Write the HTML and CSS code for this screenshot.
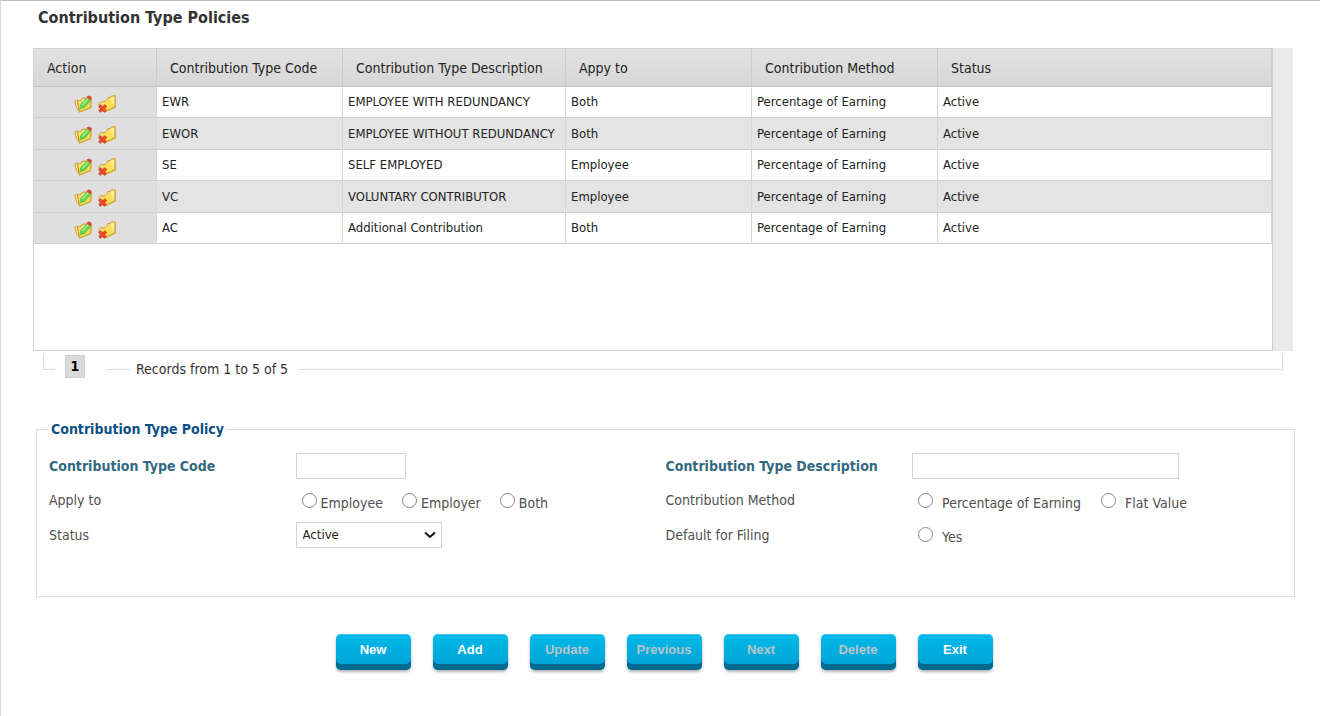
FILE: index.html
```html
<!DOCTYPE html>
<html lang="en">
<head>
<meta charset="utf-8">
<title>Contribution Type Policies</title>
<link rel="stylesheet" href="styles.css">
</head>
<body>
<svg class="sprite" aria-hidden="true">
  <defs>
    <linearGradient id="gold" x1="0" y1="0" x2="1" y2="1">
      <stop offset="0" stop-color="#fff3a0"/>
      <stop offset="1" stop-color="#e8b820"/>
    </linearGradient>
    <symbol id="edit" viewBox="0 0 18 18">
      <path d="M.8 6.2 3.6 4.8 5 15.8 2.6 12.8Z" fill="#fbe58c" stroke="#c99a38" stroke-width=".9"/>
      <path d="M3.6 6.4 7 5.4 8 3.4 11.5 2.8 12 4.2 17.2 3.6 17 12.6 5.4 17.2Z" fill="url(#gold)" stroke="#c1921f" stroke-width=".9"/>
      <path d="M5.5 8 15.8 5 15.6 12 6.4 15.6Z" fill="#f8dc58"/>
      <path d="M5.8 14 6.6 9.8 13 2.4 16.6 5.2 10.6 12.4Z" fill="#58d648" stroke="#49b13c" stroke-width=".5"/>
      <path d="M8.4 10.2 14.2 3.8" stroke="#a9f094" stroke-width="1.4"/>
      <path d="M12.6 1.4 14.8.4 17.6 2 17.4 4.6 16.4 5.2 13 2.6Z" fill="#e44436"/>
    </symbol>
    <symbol id="remove" viewBox="0 0 18 18">
      <path d="M.8 8.6 2.5 7.2 7 6.4 9.2 4.4 10 2.4 12 2.8 13.3 1 17.2.6 17.4 12.2 7.5 16.6 2 14Z" fill="url(#gold)" stroke="#c9982a" stroke-width=".9"/>
      <path d="M10 5.5 12.8 4 13.8 2.2 16 2 16 10.4 10 12.5Z" fill="#fff0a0"/>
      <ellipse cx="11" cy="9.2" rx="4" ry="4.4" fill="#fade58"/>
      <path d="M1.4 10.4 7.6 16.6M8 10.4 1.4 16.6" stroke="#c83a20" stroke-width="3.2"/>
      <path d="M1.8 10.8 7.2 16M7.6 10.8 1.8 16.2" stroke="#f04c2e" stroke-width="2"/>
    </symbol>
  </defs>
</svg>
<main class="page">
  <h1 class="title">Contribution Type Policies</h1>

  <div class="grid-box">
    <div class="grid-body">
      <table class="grid">
        <colgroup><col class="c-action"><col class="c-code"><col class="c-desc"><col class="c-mid"><col class="c-mid"><col></colgroup>
        <thead>
          <tr><th>Action</th><th>Contribution Type Code</th><th>Contribution Type Description</th><th>Appy to</th><th>Contribution Method</th><th>Status</th></tr>
        </thead>
        <tbody>
          <tr><td class="actions"><button type="button" class="icon" aria-label="Edit"><svg><use href="#edit"/></svg></button><button type="button" class="icon" aria-label="Delete"><svg><use href="#remove"/></svg></button></td><td>EWR</td><td>EMPLOYEE WITH REDUNDANCY</td><td>Both</td><td>Percentage of Earning</td><td>Active</td></tr>
          <tr><td class="actions"><button type="button" class="icon" aria-label="Edit"><svg><use href="#edit"/></svg></button><button type="button" class="icon" aria-label="Delete"><svg><use href="#remove"/></svg></button></td><td>EWOR</td><td>EMPLOYEE WITHOUT REDUNDANCY</td><td>Both</td><td>Percentage of Earning</td><td>Active</td></tr>
          <tr><td class="actions"><button type="button" class="icon" aria-label="Edit"><svg><use href="#edit"/></svg></button><button type="button" class="icon" aria-label="Delete"><svg><use href="#remove"/></svg></button></td><td>SE</td><td>SELF EMPLOYED</td><td>Employee</td><td>Percentage of Earning</td><td>Active</td></tr>
          <tr><td class="actions"><button type="button" class="icon" aria-label="Edit"><svg><use href="#edit"/></svg></button><button type="button" class="icon" aria-label="Delete"><svg><use href="#remove"/></svg></button></td><td>VC</td><td>VOLUNTARY CONTRIBUTOR</td><td>Employee</td><td>Percentage of Earning</td><td>Active</td></tr>
          <tr><td class="actions"><button type="button" class="icon" aria-label="Edit"><svg><use href="#edit"/></svg></button><button type="button" class="icon" aria-label="Delete"><svg><use href="#remove"/></svg></button></td><td>AC</td><td>Additional Contribution</td><td>Both</td><td>Percentage of Earning</td><td>Active</td></tr>
        </tbody>
      </table>
    </div>
    <div class="gutter"></div>
  </div>

  <nav class="pager" aria-label="Pages">
    <span class="rule rule-left"></span>
    <button type="button" class="page-no">1</button>
    <span class="rule rule-mid"></span>
    <span class="records">Records from 1 to 5 of 5</span>
    <span class="rule rule-right"></span>
  </nav>

  <form>
    <fieldset class="policy">
      <legend>Contribution Type Policy</legend>
      <div class="fields">
        <label class="required" for="code">Contribution Type Code</label>
        <div><input class="text short" id="code" type="text"></div>
        <label class="required" for="desc">Contribution Type Description</label>
        <div><input class="text long" id="desc" type="text"></div>

        <span>Apply to</span>
        <div class="choices">
          <label class="choice"><input type="radio" name="apply"><span>Employee</span></label>
          <label class="choice"><input type="radio" name="apply"><span>Employer</span></label>
          <label class="choice"><input type="radio" name="apply"><span>Both</span></label>
        </div>
        <span>Contribution Method</span>
        <div class="choices wide">
          <label class="choice"><input type="radio" name="method"><span>Percentage of Earning</span></label>
          <label class="choice"><input type="radio" name="method"><span>Flat Value</span></label>
        </div>

        <label for="status">Status</label>
        <div class="select-box">
          <select id="status"><option>Active</option><option>Inactive</option></select>
          <svg class="chevron" viewBox="0 0 12 8" aria-hidden="true"><path d="M1 1.5 6 6 11 1.5"/></svg>
        </div>
        <span>Default for Filing</span>
        <div class="choices wide">
          <label class="choice"><input type="radio" name="default"><span>Yes</span></label>
        </div>
      </div>
    </fieldset>
    <div class="buttons">
      <button type="button" class="btn">New</button>
      <button type="button" class="btn">Add</button>
      <button type="button" class="btn" disabled>Update</button>
      <button type="button" class="btn" disabled>Previous</button>
      <button type="button" class="btn" disabled>Next</button>
      <button type="button" class="btn" disabled>Delete</button>
      <button type="button" class="btn">Exit</button>
    </div>
  </form>
</main>
</body>
</html>
```
FILE: styles.css
```css
* { box-sizing: border-box; }

body {
  margin: 0;
  min-height: 100vh;
  border-top: 1px solid #bfbfbf;
  border-left: 1px solid #dcdcdc;
  background: #fff;
  color: #505050;
  font: 14px/20px Tahoma, "DejaVu Sans Condensed", "Noto Sans", sans-serif;
}

.sprite { display: block; width: 0; height: 0; }
.page { padding: 7px 25px 20px 32px; }

.title {
  margin: 0 0 20px;
  padding-left: 5px;
  color: #333;
  font-size: 16px;
  line-height: 20px;
}

/* Results grid */
.grid-box { display: flex; margin-right: 2px; }
.grid-body {
  flex: 1;
  min-height: 303px;
  border: 1px solid #d0d0d0;
}
.gutter { width: 20px; background: #eaeaea; }

.grid {
  width: 100%;
  table-layout: fixed;
  border-collapse: separate;
  border-spacing: 0;
  color: #222;
}
.c-action { width: 123px; }
.c-code { width: 186px; }
.c-desc { width: 223px; }
.c-mid { width: 186px; }

.grid th {
  height: 38px;
  padding: 0 0 0 13px;
  border-right: 1px solid #cbcbcb;
  border-bottom: 1px solid #c4c4c4;
  background: linear-gradient(#e2e2e2, #d7d7d7);
  font-weight: normal;
  text-align: left;
  white-space: nowrap;
}
.grid td {
  height: 31px;
  padding: 0 0 0 5px;
  border-right: 1px solid #d6d6d6;
  border-bottom: 1px solid #cfcfcf;
  font-size: 13px;
  white-space: nowrap;
}
.grid tbody tr:nth-child(even) td { height: 32px; background: #e4e4e4; }
.grid .actions,
.grid tbody tr:nth-child(even) .actions {
  padding: 0;
  background: #dfdfdf;
  text-align: center;
}
.icon {
  width: 18px;
  height: 18px;
  margin: 3px 3px 0;
  padding: 0;
  border: 0;
  background: none;
  vertical-align: middle;
}
.icon svg { display: block; width: 18px; height: 18px; }

/* Pager */
.pager {
  display: flex;
  height: 28px;
  margin: 3px 12px 0 10px;
}
.rule {
  height: 16px;
  border-bottom: 1px solid #dcdcdc;
}
.rule-left { width: 12px; border-left: 1px solid #dcdcdc; }
.rule-mid { width: 24px; margin: 0 6px 0 21px; }
.rule-right { flex: 1; margin-left: 11px; border-right: 1px solid #dcdcdc; }
.page-no {
  width: 20px;
  height: 23px;
  margin: 1px 0 0 10px;
  padding: 0 0 2px;
  border: 1px solid #cfcfcf;
  background: #dadada;
  color: #000;
  font: bold 14px/20px Tahoma, "DejaVu Sans Condensed", sans-serif;
}
.records { padding-top: 5px; color: #333; }

/* Policy form */
.policy {
  min-height: 178px;
  min-width: 0;
  margin: 37px 0 0 3px;
  padding: 13px 12px 48px;
  border: 1px solid #dcdcdc;
}
.policy legend {
  padding: 0 2px;
  color: #0b4f85;
  font-weight: bold;
}
.fields {
  display: grid;
  grid-template-columns: 2fr 3fr 2fr 3fr;
  grid-template-rows: 27px 42px 27px;
  align-items: center;
}
.required { color: #33697f; font-weight: bold; }
.text {
  display: block;
  height: 26px;
  border: 1px solid #d0d6d6;
  background: #fff;
}
.short { width: 110px; }
.long { width: 267px; max-width: 100%; }

.choices { display: flex; gap: 19px; padding-left: 6px; }
.choice { display: flex; gap: 4px; }
.choices.wide { gap: 20px; }
.choices.wide .choice { gap: 9px; }
.choice span { padding-top: 5px; }
.choice input {
  width: 15px;
  height: 15px;
  margin: 5px 0 0;
  appearance: none;
  border: 1px solid #858585;
  border-radius: 50%;
  background: #fff;
}
.choice input:checked { background: radial-gradient(#0a84c4 45%, #fff 50%); }

.select-box { position: relative; width: 146px; }
.select-box select {
  display: block;
  width: 100%;
  height: 26px;
  padding: 0 6px;
  appearance: none;
  border: 1px solid #d0d6d6;
  border-radius: 0;
  background: #fff;
  color: #222;
  font: 13px/20px Tahoma, "DejaVu Sans Condensed", sans-serif;
}
.chevron {
  position: absolute;
  top: 9px;
  right: 6px;
  width: 12px;
  height: 8px;
  fill: none;
  stroke: #111;
  stroke-width: 2;
  pointer-events: none;
}

/* Command buttons */
.buttons {
  display: flex;
  justify-content: center;
  gap: 22px;
  margin-top: 37px;
}
.btn {
  width: 75px;
  height: 36px;
  padding: 0 0 4px;
  border: 0;
  border-radius: 5px;
  background: linear-gradient(#00b9ea, #00a2d2);
  box-shadow: inset 0 -6px 0 #006a90, inset 0 1px 0 #3cc8ee, 0 2px 3px rgba(0, 0, 0, .3);
  color: #fff;
  font: bold 13px/20px "Liberation Sans", Arial, sans-serif;
}
.btn:disabled { color: #b9c4c9; }
```
